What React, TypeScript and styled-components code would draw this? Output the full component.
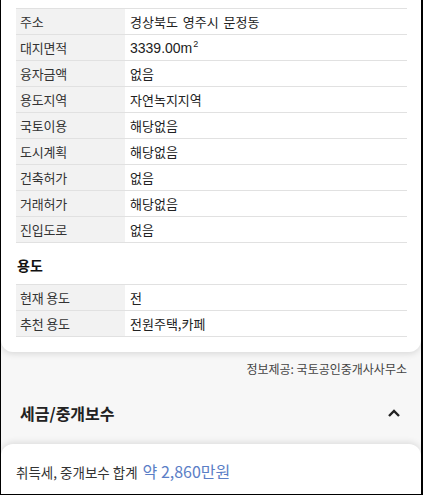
import React from "react";
import styled, { createGlobalStyle } from "styled-components";

const Global = createGlobalStyle`
  html, body { margin: 0; padding: 0; }
  body {
    background: #f7f7f7;
    font-family: "Noto Sans CJK KR", "Noto Sans", "Liberation Sans", sans-serif;
    color: #222;
  }
`;

const Frame = styled.div`
  width: 423px;
  height: 495px;
  box-sizing: border-box;
  border-left: 1px solid #000;
  border-right: 2px solid #000;
  border-bottom: 1px solid #000;
  background: #f7f7f7;
  overflow: hidden;
  display: flex;
  flex-direction: column;
`;

const Card = styled.div`
  background: #fff;
  border-radius: 0 0 12px 12px;
  box-shadow: 0 2px 6px rgba(0, 0, 0, 0.12);
  padding: 8px 14px 15px 15px;
`;

const Table = styled.div`
  display: grid;
  grid-template-columns: 109px 1fr;
  border-top: 1px solid #e1e1e1;
`;

const Label = styled.div`
  background: #f2f2f2;
  height: 25px;
  border-bottom: 1px solid #e1e1e1;
  display: flex;
  align-items: center;
  padding-left: 4px;
  font-size: 13px;
  letter-spacing: -0.2px;
  color: #333;
`;

const Value = styled.div`
  height: 25px;
  border-bottom: 1px solid #e1e1e1;
  display: flex;
  align-items: center;
  padding-left: 5px;
  font-size: 13px;
  color: #222;
  word-spacing: 2px;
`;

const Num = styled.span`
  font-family: "Liberation Sans", sans-serif;
  font-size: 14px;
`;

const Sup = styled.span`
  font-size: 9px;
  vertical-align: 6px;
  margin-left: 1px;
`;

const SubTitle = styled.div`
  font-size: 14px;
  font-weight: 700;
  color: #111;
  margin: 13px 0 9px 1px;
  line-height: 19px;
`;

const Source = styled.div`
  font-size: 12px;
  color: #444;
  text-align: right;
  padding: 8px 14px 0 0;
  line-height: 17px;
`;

const AccHeader = styled.div`
  display: flex;
  align-items: center;
  justify-content: space-between;
  padding: 0 20px 0 19px;
  height: 44px;
  margin-top: 14px;
`;

const AccTitle = styled.div`
  font-size: 16px;
  font-weight: 700;
  color: #222;
`;

const Card2 = styled.div`
  flex: 1;
  background: #fff;
  border-radius: 12px 12px 0 0;
  box-shadow: 0 -2px 6px rgba(0, 0, 0, 0.1);
  margin-top: 9px;
  padding: 15px 15px 0 15px;
`;

const Summary = styled.div`
  font-size: 13.5px;
  color: #333;
  display: flex;
  align-items: baseline;
  gap: 5px;
`;

const Amount = styled.span`
  color: #5b7ec6;
  font-size: 16px;
`;

const rows1: [string, React.ReactNode][] = [
  ["주소", "경상북도 영주시 문정동"],
  ["대지면적", <Num>3339.00m<Sup>2</Sup></Num>],
  ["융자금액", "없음"],
  ["용도지역", "자연녹지지역"],
  ["국토이용", "해당없음"],
  ["도시계획", "해당없음"],
  ["건축허가", "없음"],
  ["거래허가", "해당없음"],
  ["진입도로", "없음"],
];

const rows2: [string, string][] = [
  ["현재 용도", "전"],
  ["추천 용도", "전원주택,카페"],
];

export default function App() {
  return (
    <>
      <Global />
      <Frame>
        <Card>
          <Table>
            {rows1.map(([k, v]) => (
              <React.Fragment key={k}>
                <Label>{k}</Label>
                <Value>{v}</Value>
              </React.Fragment>
            ))}
          </Table>
          <SubTitle>용도</SubTitle>
          <Table>
            {rows2.map(([k, v]) => (
              <React.Fragment key={k}>
                <Label>{k}</Label>
                <Value>{v}</Value>
              </React.Fragment>
            ))}
          </Table>
        </Card>
        <Source>정보제공: 국토공인중개사사무소</Source>
        <AccHeader>
          <AccTitle>세금/중개보수</AccTitle>
          <svg width="14" height="10" viewBox="0 0 14 10">
            <path d="M2 8 L7 3 L12 8" fill="none" stroke="#222" strokeWidth="2.4" />
          </svg>
        </AccHeader>
        <Card2>
          <Summary>
            <span>취득세, 중개보수 합계</span>
            <Amount>약 2,860만원</Amount>
          </Summary>
        </Card2>
      </Frame>
    </>
  );
}
